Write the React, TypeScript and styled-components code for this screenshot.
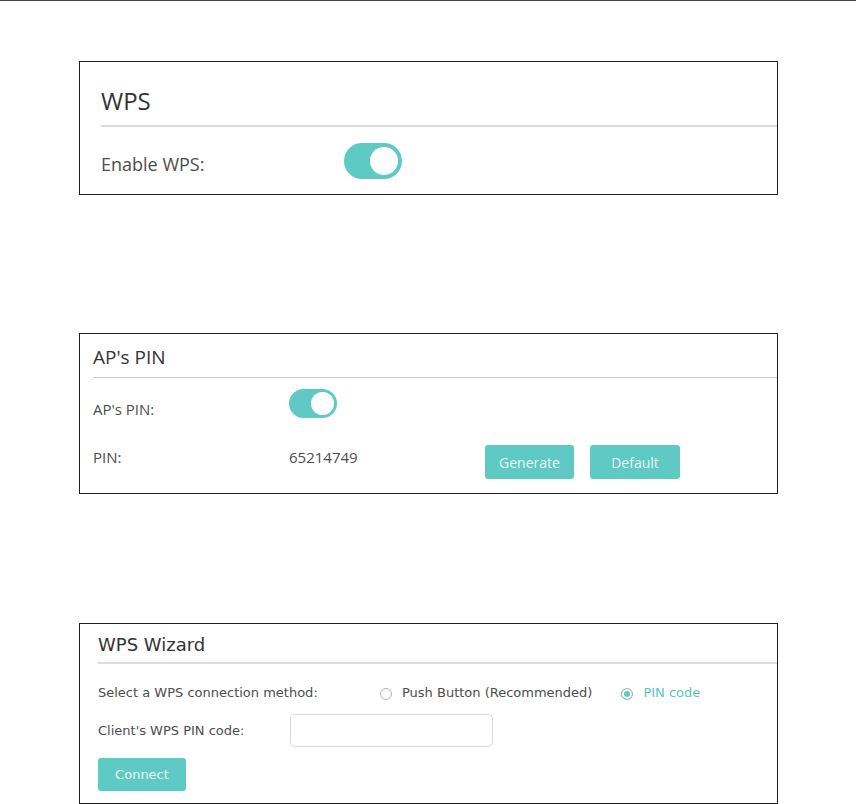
import React from "react";
import styled, { createGlobalStyle } from "styled-components";

const TEAL = "#5fc9c4";

const Global = createGlobalStyle`
  html, body { margin: 0; padding: 0; background: #fff; }
  body { font-family: "Open Sans", sans-serif; }
`;

const Page = styled.div`
  border-top: 1px solid #444;
  padding: 60px 0 0 79px;
  display: flex;
  flex-direction: column;
`;

const Panel = styled.section<{ $padTop: number; $padLeft: number; $padBottom: number; $gapAfter?: number }>`
  box-sizing: border-box;
  width: 699px;
  border: 1px solid #1e1e1e;
  padding: ${(p) => p.$padTop}px 0 ${(p) => p.$padBottom}px ${(p) => p.$padLeft}px;
  margin-bottom: ${(p) => p.$gapAfter ?? 0}px;
  display: flex;
  flex-direction: column;
`;

const Title = styled.h2<{ $size: number; $lh: number; $font?: string; $mb: number }>`
  margin: 0 0 ${(p) => p.$mb}px 0;
  font-family: ${(p) => p.$font ?? '"Open Sans", sans-serif'};
  font-weight: 400;
  font-size: ${(p) => p.$size}px;
  line-height: ${(p) => p.$lh}px;
  color: #333;
`;

const Divider = styled.div<{ $h: number; $color: string; $mb: number }>`
  height: ${(p) => p.$h}px;
  background: ${(p) => p.$color};
  margin-bottom: ${(p) => p.$mb}px;
`;

const Row = styled.div<{ $mb?: number; $align?: string }>`
  display: flex;
  align-items: ${(p) => p.$align ?? "flex-start"};
  margin-bottom: ${(p) => p.$mb ?? 0}px;
`;

const Label = styled.div<{ $w: number; $size: number; $lh: number; $pt?: number; $font?: string }>`
  flex: 0 0 ${(p) => p.$w}px;
  font-family: ${(p) => p.$font ?? '"Open Sans", sans-serif'};
  font-size: ${(p) => p.$size}px;
  line-height: ${(p) => p.$lh}px;
  padding-top: ${(p) => p.$pt ?? 0}px;
  color: #4d4d4d;
`;

const Toggle = styled.div<{ $w: number; $h: number; $knob: number }>`
  position: relative;
  width: ${(p) => p.$w}px;
  height: ${(p) => p.$h}px;
  border-radius: ${(p) => p.$h / 2}px;
  background: ${TEAL};
  &::after {
    content: "";
    position: absolute;
    top: ${(p) => (p.$h - p.$knob) / 2}px;
    right: ${(p) => (p.$h - p.$knob) / 2}px;
    width: ${(p) => p.$knob}px;
    height: ${(p) => p.$knob}px;
    border-radius: 50%;
    background: #fff;
  }
`;

const Button = styled.button<{ $w: number; $h: number; $size: number; $font?: string; $mr?: number }>`
  width: ${(p) => p.$w}px;
  height: ${(p) => p.$h}px;
  margin-right: ${(p) => p.$mr ?? 0}px;
  border: none;
  border-radius: 3px;
  background: ${TEAL};
  color: rgba(255, 255, 255, 0.88);
  font-family: ${(p) => p.$font ?? '"Open Sans", sans-serif'};
  font-size: ${(p) => p.$size}px;
  padding: 0;
  cursor: pointer;
`;

const Options = styled.div`
  display: flex;
  align-items: center;
  gap: 29px;
`;

const Option = styled.label<{ $active?: boolean }>`
  display: flex;
  align-items: center;
  gap: 10px;
  font-family: "DejaVu Sans", sans-serif;
  font-size: 13px;
  line-height: 18px;
  color: ${(p) => (p.$active ? "#5cc3bf" : "#4d4d4d")};
`;

const Radio = styled.span<{ $checked?: boolean }>`
  box-sizing: border-box;
  width: 12px;
  height: 12px;
  border-radius: 50%;
  border: 1px solid #b4b4b4;
  background: ${(p) => (p.$checked ? TEAL : "#fff")};
  box-shadow: ${(p) => (p.$checked ? "inset 0 0 0 2px #fff" : "none")};
  margin-top: 1px;
`;

const Input = styled.input`
  box-sizing: border-box;
  width: 203px;
  height: 33px;
  border: 1px solid #d9d9d9;
  border-radius: 5px;
  outline: none;
  background: #fff;
`;

const DV = '"DejaVu Sans", sans-serif';

export default function App() {
  return (
    <>
      <Global />
      <Page>
        <Panel $padTop={23} $padLeft={21} $padBottom={15} $gapAfter={138}>
          <Title $size={24} $lh={32} $mb={8}>WPS</Title>
          <Divider $h={2} $color="#dadada" $mb={16} />
          <Row>
            <Label $w={243} $size={18} $lh={24} $pt={9}>Enable WPS:</Label>
            <Toggle $w={58} $h={36} $knob={28} />
          </Row>
        </Panel>

        <Panel $padTop={11} $padLeft={13} $padBottom={14} $gapAfter={129}>
          <Title $size={19} $lh={24} $mb={8}>AP's PIN</Title>
          <Divider $h={1} $color="#c8c8c8" $mb={11} />
          <Row $mb={26}>
            <Label $w={196} $size={15} $lh={20} $pt={10}>AP's PIN:</Label>
            <Toggle $w={48} $h={29} $knob={23} />
          </Row>
          <Row>
            <Label $w={196} $size={15} $lh={20} $pt={2}>PIN:</Label>
            <Label $w={196} $size={15} $lh={20} $pt={2}>65214749</Label>
            <Button $w={89} $h={34} $size={14} $mr={16}>Generate</Button>
            <Button $w={90} $h={34} $size={14}>Default</Button>
          </Row>
        </Panel>

        <Panel $padTop={9} $padLeft={18} $padBottom={12}>
          <Title $size={18} $lh={24} $font={DV} $mb={5}>WPS Wizard</Title>
          <Divider $h={2} $color="#dcdcdc" $mb={20} />
          <Row $align="center" $mb={12}>
            <Label $w={282} $size={13} $lh={18} $font={DV}>Select a WPS connection method:</Label>
            <Options>
              <Option>
                <Radio />
                Push Button (Recommended)
              </Option>
              <Option $active>
                <Radio $checked />
                PIN code
              </Option>
            </Options>
          </Row>
          <Row $align="center" $mb={11}>
            <Label $w={192} $size={13} $lh={18} $font={DV}>Client's WPS PIN code:</Label>
            <Input />
          </Row>
          <Row>
            <Button $w={88} $h={33} $size={13} $font={DV}>Connect</Button>
          </Row>
        </Panel>
      </Page>
    </>
  );
}
